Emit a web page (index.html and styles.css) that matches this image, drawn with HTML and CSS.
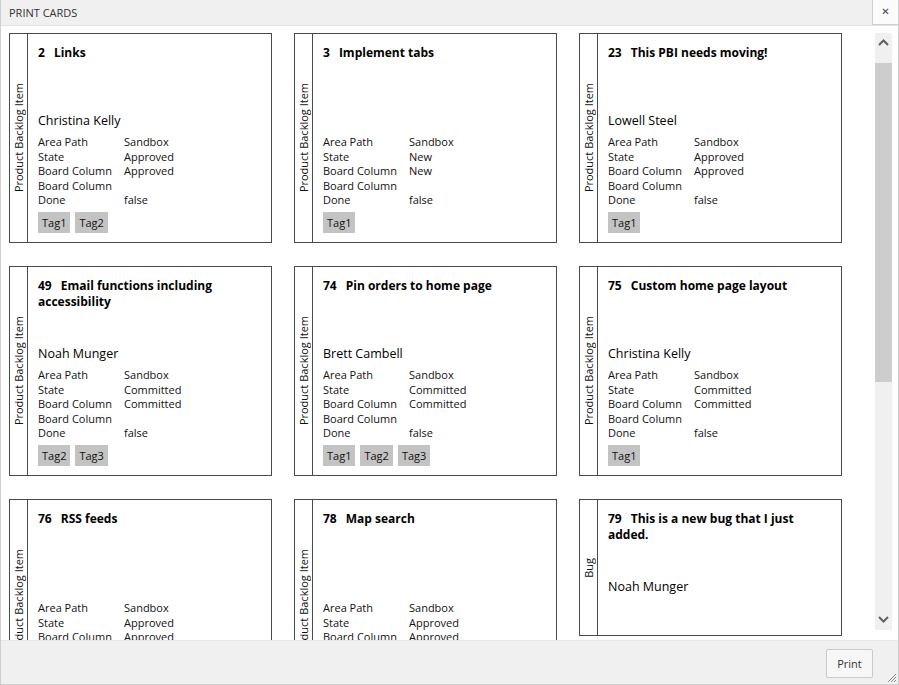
FILE: index.html
```html
<!DOCTYPE html>
<html>
<head>
<meta charset="utf-8">
<link rel="stylesheet" href="styles.css">
</head>
<body>
<div class="window">
  <div class="titlebar">
    <span class="title">PRINT CARDS</span>
    <button class="close">&#x2715;</button>
  </div>
  <div class="content">
    <div class="cards">
      <div class="card">
        <div class="strip"><span>Product Backlog Item</span></div>
        <div class="body">
          <div class="ctitle"><span class="num">2</span>Links</div>
          <div class="assignee">Christina Kelly</div>
          <div class="fields">
            <span>Area Path</span><span>Sandbox</span>
            <span>State</span><span>Approved</span>
            <span>Board Column</span><span>Approved</span>
            <span>Board Column</span><span></span>
            <span>Done</span><span>false</span>
          </div>
          <div class="tags"><span class="tag">Tag1</span><span class="tag">Tag2</span></div>
        </div>
      </div>
      <div class="card">
        <div class="strip"><span>Product Backlog Item</span></div>
        <div class="body">
          <div class="ctitle"><span class="num">3</span>Implement tabs</div>
          <div class="assignee"></div>
          <div class="fields">
            <span>Area Path</span><span>Sandbox</span>
            <span>State</span><span>New</span>
            <span>Board Column</span><span>New</span>
            <span>Board Column</span><span></span>
            <span>Done</span><span>false</span>
          </div>
          <div class="tags"><span class="tag">Tag1</span></div>
        </div>
      </div>
      <div class="card">
        <div class="strip"><span>Product Backlog Item</span></div>
        <div class="body">
          <div class="ctitle"><span class="num">23</span>This PBI needs moving!</div>
          <div class="assignee">Lowell Steel</div>
          <div class="fields">
            <span>Area Path</span><span>Sandbox</span>
            <span>State</span><span>Approved</span>
            <span>Board Column</span><span>Approved</span>
            <span>Board Column</span><span></span>
            <span>Done</span><span>false</span>
          </div>
          <div class="tags"><span class="tag">Tag1</span></div>
        </div>
      </div>
      <div class="card">
        <div class="strip"><span>Product Backlog Item</span></div>
        <div class="body">
          <div class="ctitle"><span class="num">49</span>Email functions including accessibility</div>
          <div class="assignee">Noah Munger</div>
          <div class="fields">
            <span>Area Path</span><span>Sandbox</span>
            <span>State</span><span>Committed</span>
            <span>Board Column</span><span>Committed</span>
            <span>Board Column</span><span></span>
            <span>Done</span><span>false</span>
          </div>
          <div class="tags"><span class="tag">Tag2</span><span class="tag">Tag3</span></div>
        </div>
      </div>
      <div class="card">
        <div class="strip"><span>Product Backlog Item</span></div>
        <div class="body">
          <div class="ctitle"><span class="num">74</span>Pin orders to home page</div>
          <div class="assignee">Brett Cambell</div>
          <div class="fields">
            <span>Area Path</span><span>Sandbox</span>
            <span>State</span><span>Committed</span>
            <span>Board Column</span><span>Committed</span>
            <span>Board Column</span><span></span>
            <span>Done</span><span>false</span>
          </div>
          <div class="tags"><span class="tag">Tag1</span><span class="tag">Tag2</span><span class="tag">Tag3</span></div>
        </div>
      </div>
      <div class="card">
        <div class="strip"><span>Product Backlog Item</span></div>
        <div class="body">
          <div class="ctitle"><span class="num">75</span>Custom home page layout</div>
          <div class="assignee">Christina Kelly</div>
          <div class="fields">
            <span>Area Path</span><span>Sandbox</span>
            <span>State</span><span>Committed</span>
            <span>Board Column</span><span>Committed</span>
            <span>Board Column</span><span></span>
            <span>Done</span><span>false</span>
          </div>
          <div class="tags"><span class="tag">Tag1</span></div>
        </div>
      </div>
      <div class="card">
        <div class="strip"><span>Product Backlog Item</span></div>
        <div class="body">
          <div class="ctitle"><span class="num">76</span>RSS feeds</div>
          <div class="assignee"></div>
          <div class="fields">
            <span>Area Path</span><span>Sandbox</span>
            <span>State</span><span>Approved</span>
            <span>Board Column</span><span>Approved</span>
            <span>Board Column</span><span></span>
            <span>Done</span><span>false</span>
          </div>
          <div class="tags"><span class="tag">Tag1</span></div>
        </div>
      </div>
      <div class="card">
        <div class="strip"><span>Product Backlog Item</span></div>
        <div class="body">
          <div class="ctitle"><span class="num">78</span>Map search</div>
          <div class="assignee"></div>
          <div class="fields">
            <span>Area Path</span><span>Sandbox</span>
            <span>State</span><span>Approved</span>
            <span>Board Column</span><span>Approved</span>
            <span>Board Column</span><span></span>
            <span>Done</span><span>false</span>
          </div>
          <div class="tags"><span class="tag">Tag1</span></div>
        </div>
      </div>
      <div class="card card-bug">
        <div class="strip"><span>Bug</span></div>
        <div class="body">
          <div class="ctitle"><span class="num">79</span>This is a new bug that I just added.</div>
          <div class="assignee">Noah Munger</div>
        </div>
      </div>
    </div>
    <div class="scrollbar">
      <div class="arrow arrow-up">
        <svg width="11" height="7" viewBox="0 0 11 7"><path d="M1 6 L5.5 1.5 L10 6" fill="none" stroke="#606060" stroke-width="2"/></svg>
      </div>
      <div class="thumb"></div>
      <div class="track"></div>
      <div class="arrow arrow-down">
        <svg width="11" height="7" viewBox="0 0 11 7"><path d="M1 1 L5.5 5.5 L10 1" fill="none" stroke="#606060" stroke-width="2"/></svg>
      </div>
    </div>
  </div>
  <div class="footer">
    <button class="print">Print</button>
    <svg class="grip" width="10" height="10" viewBox="0 0 10 10"><path d="M9 1 L1 9 M9 4 L4 9 M9 7 L7 9" stroke="#8a8a8a" stroke-width="1"/></svg>
  </div>
</div>
</body>
</html>
```

FILE: styles.css
```css
* { box-sizing: border-box; }
html, body { margin: 0; padding: 0; }
body {
  font-family: "Open Sans", "Noto Sans", sans-serif;
  color: #000;
  background: #fff;
}
.window {
  width: 899px;
  height: 685px;
  display: flex;
  flex-direction: column;
  border: 1px solid #cfcfcf;
  border-top: none;
  background: #f0f0f0;
  overflow: hidden;
}
.titlebar {
  height: 26px;
  display: flex;
  align-items: center;
  justify-content: space-between;
  background: #f0f0f0;
  border-bottom: 1px solid #e2e2e2;
}
.title {
  font-size: 11px;
  color: #333;
  padding-left: 8px;
}
.close {
  width: 26px;
  height: 26px;
  border: none;
  border-left: 1px solid #cfcfcf;
  border-bottom: 1px solid #cfcfcf;
  background: #fbfbfb;
  font-size: 10px;
  font-weight: bold;
  color: #444;
  padding: 0;
  margin-top: -1px;
  font-family: "DejaVu Sans", sans-serif;
}
.content {
  flex: 1;
  display: flex;
  background: #fff;
  overflow: hidden;
  min-height: 0;
}
.cards {
  flex: 1;
  overflow: hidden;
  padding: 7px 0 0 8px;
  display: grid;
  grid-template-columns: repeat(3, 263px);
  column-gap: 22px;
  row-gap: 23px;
  align-items: start;
  align-content: start;
}
.card {
  height: 210px;
  border: 1px solid #4a4a4a;
  display: flex;
  background: #fff;
}
.card-bug { height: 137px; }
.strip {
  width: 18px;
  border-right: 1px solid #4a4a4a;
  display: flex;
  align-items: center;
  justify-content: center;
  flex-shrink: 0;
}
.strip span {
  writing-mode: vertical-rl;
  transform: rotate(180deg);
  font-size: 11px;
  white-space: nowrap;
  color: #111;
}
.body {
  flex: 1;
  padding: 11px 10px 0 10px;
  min-width: 0;
}
.ctitle {
  height: 66px;
  font-size: 12px;
  font-weight: bold;
  line-height: 16px;
}
.num { margin-right: 9px; }
.assignee {
  height: 20px;
  line-height: 20px;
  font-size: 12.5px;
}
.fields {
  margin-top: 4px;
  display: grid;
  grid-template-columns: 86px 1fr;
  font-size: 11px;
  line-height: 14.6px;
  color: #111;
}
.fields span { white-space: nowrap; height: 14.6px; }
.tags {
  margin-top: 4px;
  display: flex;
  gap: 5px;
}
.tag {
  background: #c3c3c3;
  height: 21px;
  line-height: 21px;
  padding: 0 4px;
  font-size: 11px;
  color: #111;
}
.scrollbar {
  width: 17px;
  margin: 7px 6px 10px 0;
  background: #f0f0f0;
  display: flex;
  flex-direction: column;
}
.arrow {
  height: 30px;
  display: flex;
  justify-content: center;
  flex-shrink: 0;
}
.arrow-up { align-items: flex-start; padding-top: 6px; }
.arrow-down { align-items: flex-end; padding-bottom: 7px; }
.thumb {
  height: 319px;
  background: #cdcdcd;
  flex-shrink: 0;
}
.track { flex: 1; }
.footer {
  height: 44px;
  display: flex;
  align-items: flex-start;
  justify-content: flex-end;
  position: relative;
  background: #f0f0f0;
  border-top: 1px solid #e8e8e8;
}
.print {
  margin: 8px 25px 0 0;
  width: 47px;
  height: 29px;
  border: 1px solid #cacaca;
  border-radius: 2px;
  background: #f7f7f7;
  font-family: "Open Sans", sans-serif;
  font-size: 11px;
  color: #333;
  padding: 0;
}
.grip {
  position: absolute;
  right: 1px;
  bottom: 1px;
}
```
